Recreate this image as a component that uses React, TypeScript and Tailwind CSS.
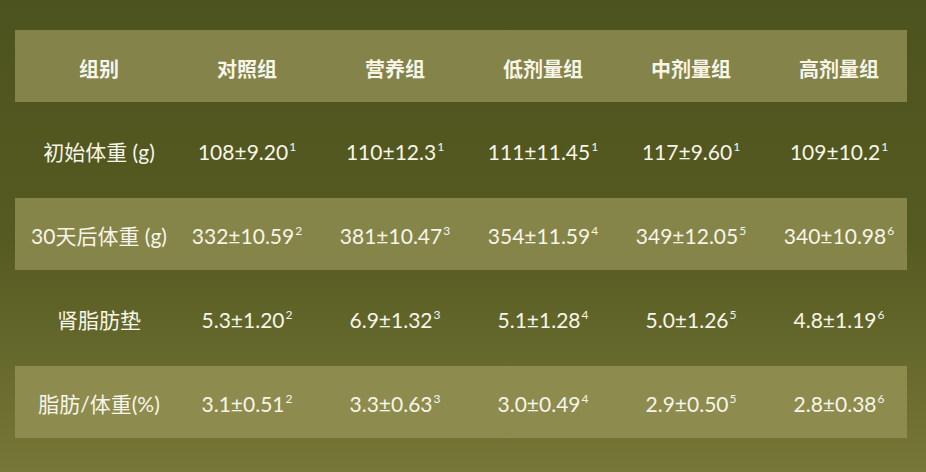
import React from "react";

type Cell = { v: string; s?: string };

const headers = ["组别", "对照组", "营养组", "低剂量组", "中剂量组", "高剂量组"];

const rows: { label: string; cells: Cell[]; bg: string }[] = [
  {
    label: "初始体重 (g)",
    bg: "",
    cells: [
      { v: "108±9.20", s: "1" },
      { v: "110±12.3", s: "1" },
      { v: "111±11.45", s: "1" },
      { v: "117±9.60", s: "1" },
      { v: "109±10.2", s: "1" },
    ],
  },
  {
    label: "30天后体重 (g)",
    bg: "bg-[#858449]",
    cells: [
      { v: "332±10.59", s: "2" },
      { v: "381±10.47", s: "3" },
      { v: "354±11.59", s: "4" },
      { v: "349±12.05", s: "5" },
      { v: "340±10.98", s: "6" },
    ],
  },
  {
    label: "肾脂肪垫",
    bg: "",
    cells: [
      { v: "5.3±1.20", s: "2" },
      { v: "6.9±1.32", s: "3" },
      { v: "5.1±1.28", s: "4" },
      { v: "5.0±1.26", s: "5" },
      { v: "4.8±1.19", s: "6" },
    ],
  },
  {
    label: "脂肪/体重(%)",
    bg: "bg-[#8d8c4e]",
    cells: [
      { v: "3.1±0.51", s: "2" },
      { v: "3.3±0.63", s: "3" },
      { v: "3.0±0.49", s: "4" },
      { v: "2.9±0.50", s: "5" },
      { v: "2.8±0.38", s: "6" },
    ],
  },
];

const font = { fontFamily: 'Lato, "Noto Sans CJK SC", sans-serif' };

export default function App() {
  return (
    <div
      className="w-[926px] h-[472px] overflow-hidden bg-gradient-to-b from-[#4d531e] via-[#555a21] to-[#777837] pt-[30px] pl-[15px] text-[#f7f5e8]"
      style={font}
    >
      <div className="w-[892px] flex flex-col gap-[12px]">
        <div className="h-[72px] bg-[#84834a] pl-[10px] grid grid-cols-[repeat(6,148px)] items-center text-[20px] font-bold">
          {headers.map((h) => (
            <div key={h} className="text-center leading-none pt-[5px]">
              {h}
            </div>
          ))}
        </div>
        {rows.map((r) => (
          <div
            key={r.label}
            className={`h-[72px] ${r.bg} pl-[10px] grid grid-cols-[repeat(6,148px)] items-center text-[21px] font-normal`}
          >
            <div className="text-center whitespace-nowrap leading-none pt-[3px]">{r.label}</div>
            {r.cells.map((c, i) => (
              <div key={i} className="text-center whitespace-nowrap leading-none pt-[3px]">
                {c.v}
                <sup className="text-[12px] -top-[9px] ml-[1px]">{c.s}</sup>
              </div>
            ))}
          </div>
        ))}
      </div>
    </div>
  );
}
